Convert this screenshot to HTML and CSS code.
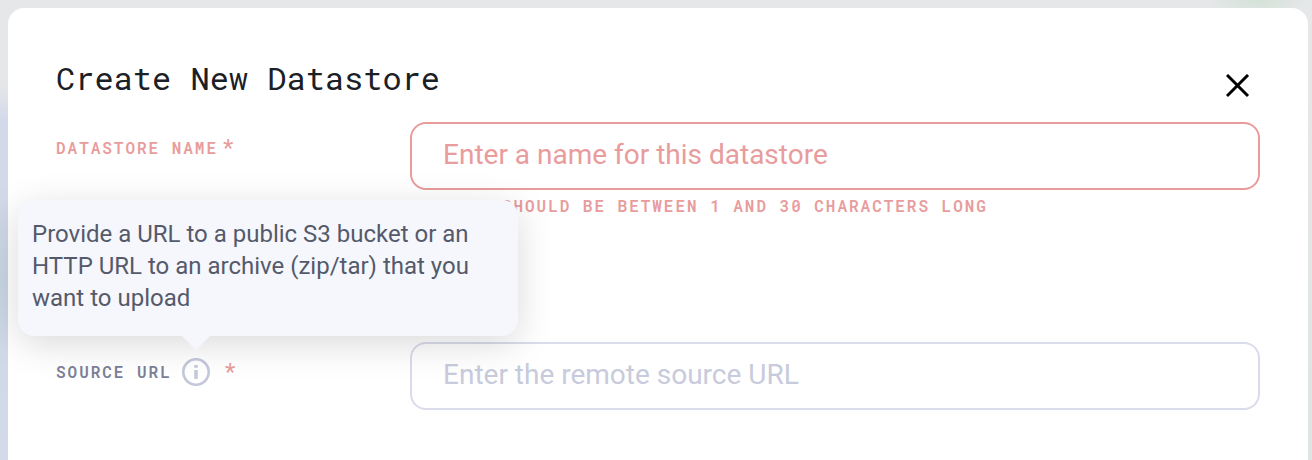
FILE: index.html
```html
<!DOCTYPE html>
<html lang="en">
<head>
<meta charset="utf-8">
<title>Create New Datastore</title>
<link rel="stylesheet" href="styles.css">
</head>
<body>
<main class="modal">
  <header class="header">
    <h1 class="title">Create New Datastore</h1>
    <button class="close" aria-label="Close"><svg width="24" height="24" viewBox="0 0 24 24"><path d="M1 1L22 22M22 1L1 22" stroke="#000" stroke-width="3"/></svg></button>
  </header>
  <div class="row row-name">
    <div class="label error"><span class="label-text">DATASTORE NAME</span><span class="star">*</span></div>
    <div class="field">
      <input class="input invalid" placeholder="Enter a name for this datastore">
      <p class="message">THIS SHOULD BE BETWEEN 1 AND 30 CHARACTERS LONG</p>
    </div>
  </div>
  <div class="row">
    <div class="label"><span class="label-text">SOURCE URL</span>
      <span class="info"><svg width="28" height="28" viewBox="0 0 28 28"><circle cx="14" cy="14" r="12.7" fill="none" stroke="#c3c8da" stroke-width="2.6"/><path d="M12.3 7h3.4v2.8h-3.4zM12.3 12h3.4v9h-3.4z" fill="#c3c8da"/></svg>
        <span class="tooltip">Provide a URL to a public S3 bucket or an HTTP URL to an archive (zip/tar) that you want to upload</span>
      </span><span class="star star-url">*</span></div>
    <div class="field"><input class="input" placeholder="Enter the remote source URL"></div>
  </div>
</main>
</body>
</html>
```
FILE: styles.css
```css
* { box-sizing: border-box; }
body {
  margin: 0;
  height: 460px;
  padding: 8px 4px 0 8px;
  overflow: hidden;
  font-family: Roboto, sans-serif;
  background:
    radial-gradient(ellipse 50px 18px at 1258px 0, #d3e2d7, transparent),
    linear-gradient(#e6e7e9, #e0e4e3) right / 8px 100% no-repeat,
    linear-gradient(#e6e7e8 0, #e6e7e8 85px, #d2d9ea 120px, #d2d9e8 200px, #c6d3e2 280px, #d0d9e7 350px, #d2dbe7) left / 8px 100% no-repeat,
    #e6e7e9;
}
.modal {
  height: 468px;
  padding: 48px 48px 0;
  border-radius: 16px;
  background: #fff;
}
.header { display: flex; justify-content: space-between; height: 66px; }
.title {
  margin: 0;
  font: 400 32px/44px "Roboto Mono", "DejaVu Sans Mono", monospace;
  color: #1b2026;
  white-space: nowrap;
}
.close { width: 24px; height: 24px; margin: 18px 10px 0 0; padding: 0; border: 0; background: none; }
.close svg { display: block; }
.row { display: grid; grid-template-columns: 354px 850px; }
.row-name { height: 220px; }
.label { display: flex; align-items: center; height: 60px; color: #7c8097; }
.label-text, .message {
  font: 600 16px/20px "Roboto Mono", "DejaVu Sans Mono", monospace;
  letter-spacing: 1.97px;
  white-space: nowrap;
}
.error { height: 52px; color: #e89c9c; }
.star { margin-left: 5px; font-size: 24px; line-height: 28px; color: #e89c9c; }
.star-url { margin-left: 15px; }
.input {
  display: block;
  width: 850px;
  height: 68px;
  padding: 0 31px 3px;
  border: 2px solid #dadceb;
  border-radius: 16px;
  background: transparent;
  font: 400 28px Roboto, sans-serif;
}
.input::placeholder { color: #c7cbdc; opacity: 1; }
.invalid { border-color: #e89c9c; }
.invalid::placeholder { color: #e89c9c; }
.message { margin: 6px 0 0 34px; color: #e89c9c; }
.info { position: relative; width: 28px; height: 28px; margin-left: 10.3px; }
.info svg { display: block; }
.tooltip {
  position: absolute;
  left: -164px;
  bottom: 50px;
  width: 500px;
  height: 136px;
  padding: 18px 14px;
  border-radius: 16px;
  background: #f6f7fc;
  box-shadow: 0 8px 36px rgba(0, 0, 0, .15);
  font-size: 24px;
  line-height: 32px;
  color: #555a6b;
}
.tooltip::after {
  content: "";
  position: absolute;
  left: 164px;
  top: 100%;
  border: 14px solid transparent;
  border-top-color: #f6f7fc;
  border-bottom: 0;
}
```
